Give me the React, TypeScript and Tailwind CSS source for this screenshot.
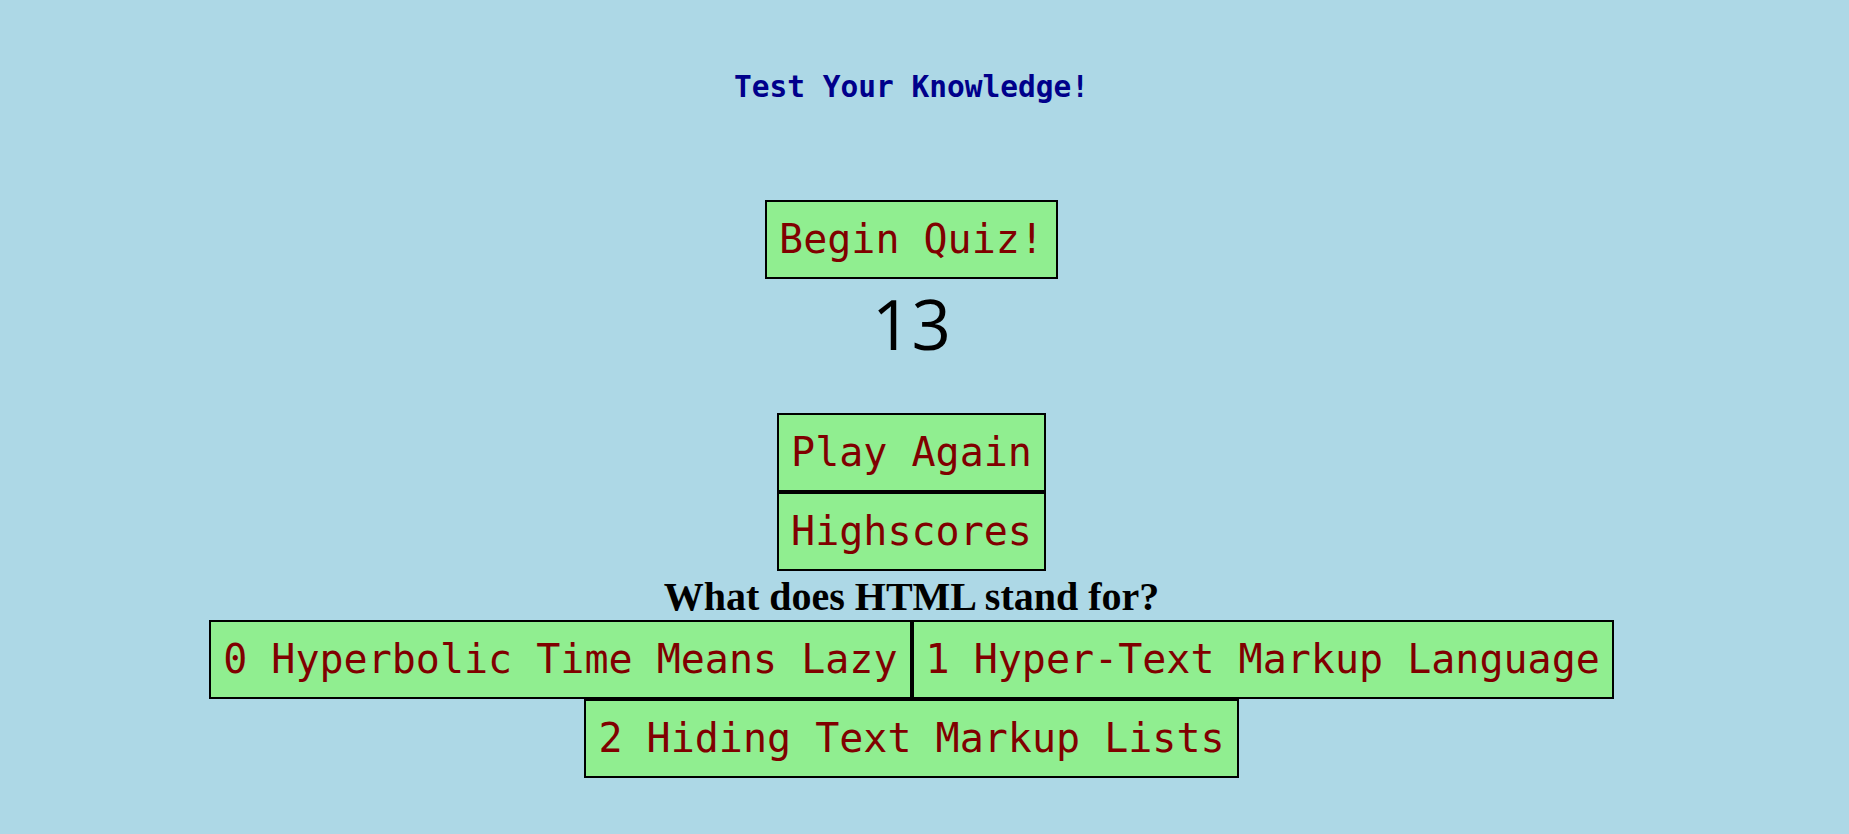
import React from 'react';

const mono = "font-['DejaVu_Sans_Mono','Liberation_Mono',monospace]";
const btn = `${mono} bg-[#90ee90] text-[#800000] border-2 border-black text-[40px] leading-[47px] px-3 py-[14px] whitespace-pre`;

const App = () => {
  const answers = ['0 Hyperbolic Time Means Lazy', '1 Hyper-Text Markup Language', '2 Hiding Text Markup Lists'];

  return (
    <div className="min-h-screen w-full bg-[#add8e6]">
      <div className="w-[1823px] flex flex-col items-center">
        {/* Header */}
        <h1 className={`${mono} mt-[70px] text-[29.5px] leading-[34px] font-bold text-[#00008b]`}>
          Test Your Knowledge!
        </h1>

        <button className={`${btn} mt-[96px]`}>Begin Quiz!</button>

        {/* Timer */}
        <div className="mt-[10px] font-['Open_Sans',sans-serif] text-[69px] leading-none text-black">13</div>

        <div className="mt-[55px] flex flex-col">
          <button className={btn}>Play Again</button>
          <button className={btn}>Highscores</button>
        </div>

        {/* Question */}
        <h2 className="mt-[3px] font-['Liberation_Serif',serif] font-bold text-[40px] leading-[45px] text-black">
          What does HTML stand for?
        </h2>

        <div className="mt-[1px] flex flex-col items-center">
          <div className="flex">
            <button className={btn}>{answers[0]}</button>
            <button className={btn}>{answers[1]}</button>
          </div>
          <div className="flex">
            <button className={btn}>{answers[2]}</button>
          </div>
        </div>
      </div>
    </div>
  );
};

export default App;
